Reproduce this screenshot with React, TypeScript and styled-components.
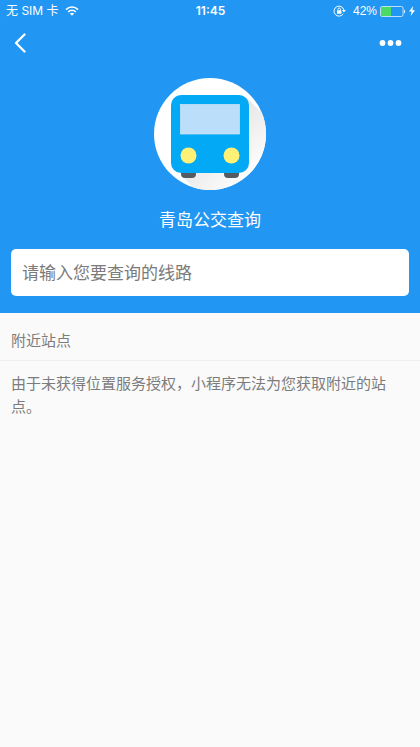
import React from "react";
import styled, { createGlobalStyle } from "styled-components";

const GlobalStyle = createGlobalStyle`
  *, *::before, *::after { box-sizing: border-box; }
  body {
    margin: 0;
    background: #fafafa;
    font-family: Inter, "Noto Sans CJK SC", sans-serif;
  }
`;

const Page = styled.div`
  min-height: 100vh;
  display: flex;
  flex-direction: column;
  background: #fafafa;
`;

const Hero = styled.header`
  display: flex;
  flex-direction: column;
  padding-bottom: 17px;
  background: #2196f3;
  color: #fff;
`;

const StatusBar = styled.div`
  display: grid;
  grid-template-columns: 1fr auto 1fr;
  align-items: center;
  height: 22px;
  padding: 0 5px 0 6px;
  font-size: 12px;
  line-height: 20px;
`;

const StatusGroup = styled.div<{ $end?: boolean }>`
  display: flex;
  align-items: center;
  justify-content: ${(p) => (p.$end ? "flex-end" : "flex-start")};
  gap: ${(p) => (p.$end ? 3 : 6)}px;
  white-space: nowrap;
`;

const Battery = styled.span`
  margin-left: 4px;
  font-family: "Liberation Sans", sans-serif;
`;

const Clock = styled.time`
  font-weight: 600;
`;

const NavBar = styled.nav`
  display: flex;
  align-items: center;
  justify-content: space-between;
  height: 42px;
  padding: 0 14px;
`;

const IconButton = styled.button`
  display: flex;
  align-items: center;
  padding: 0;
  height: 32px;
  border: 0;
  background: none;
  color: inherit;
  cursor: pointer;
`;

const Brand = styled.div`
  display: flex;
  flex-direction: column;
  align-items: center;
  padding-top: 14px;
`;

const Title = styled.h1`
  margin: 18px 0 16px;
  font-size: 17px;
  line-height: 25px;
  font-weight: 400;
`;

const SearchField = styled.input`
  height: 47px;
  margin: 0 11px;
  padding: 0 11px;
  border: 0;
  border-radius: 5px;
  background: #fff;
  color: #333;
  font: inherit;
  font-size: 17px;
  outline: none;
  &::placeholder { color: #7a7a7a; opacity: 1; }
`;

const Nearby = styled.section`
  color: #7c7c7c;
  font-size: 15px;
`;

const SectionTitle = styled.h2`
  margin: 0;
  padding: 16px 11px 8px;
  border-bottom: 1px solid #eeeeee;
  font-size: 15px;
  line-height: 23px;
  font-weight: 400;
`;

const Message = styled.p`
  margin: 0;
  padding: 11px;
  line-height: 23px;
`;

const WifiIcon = () => (
  <svg width="14" height="10" viewBox="0 0 14 10" fill="none" stroke="#fff" strokeWidth="1.6" aria-label="Wi-Fi">
    <path d="M1 3.6C4.4 .2 9.6 .2 13 3.6" />
    <path d="M3.2 5.9c2.2-2 5.4-2 7.6 0" />
    <path d="M4.9 7.6c1.2-1 3-1 4.2 0L7 9.8z" fill="#fff" stroke="none" />
  </svg>
);

const RotationLockIcon = () => (
  <svg width="13" height="12" viewBox="0 0 13 12" fill="none" stroke="#fff" aria-label="方向锁定">
    <path d="M10.2 8.9A5 5 0 1 1 10.9 5" strokeWidth="1" />
    <path d="M9 5h3.8L10.9 7.5z" fill="#fff" stroke="none" />
    <rect x="4" y="5.2" width="4.4" height="3.6" rx=".4" fill="#fff" stroke="none" />
    <path d="M4.9 5.4V4.3a1.3 1.3 0 0 1 2.6 0v1.1" strokeWidth=".9" />
  </svg>
);

const BatteryIcon = () => (
  <svg width="26" height="11" viewBox="0 0 26 11" aria-hidden="true">
    <rect x=".5" y=".5" width="22.5" height="10" rx="1.6" fill="none" stroke="#fff" strokeOpacity=".7" />
    <path d="M2 1h9v9H2a1 1 0 0 1-1-1V2a1 1 0 0 1 1-1z" fill="#4cd964" />
    <path d="M24 3.5c1.6.4 1.6 3.6 0 4z" fill="#fff" fillOpacity=".85" />
  </svg>
);

const BoltIcon = () => (
  <svg width="6" height="10" viewBox="0 0 6 10" fill="#fff" aria-label="充电中">
    <path d="M4.2 0L0 5.6h2.6L1.7 10 6 4.2H3.4z" />
  </svg>
);

const BackIcon = () => (
  <svg width="12" height="20" viewBox="0 0 12 20" fill="none" stroke="#fff" strokeWidth="2.3" strokeLinecap="round" strokeLinejoin="round">
    <path d="M10.5 1.5L2 10l8.5 8.5" />
  </svg>
);

const MoreIcon = () => (
  <svg width="28" height="6" viewBox="0 0 28 6" fill="#fff">
    <circle cx="4.5" cy="3" r="2.9" />
    <circle cx="12.5" cy="3" r="2.9" />
    <circle cx="20.5" cy="3" r="2.9" />
  </svg>
);

const BusLogo = () => (
  <svg width="112" height="112" viewBox="0 0 112 112" role="img" aria-label="公交">
    <defs>
      <clipPath id="disc">
        <circle cx="56" cy="56" r="56" />
      </clipPath>
      <linearGradient id="shade" x1="30" y1="30" x2="100" y2="100" gradientUnits="userSpaceOnUse">
        <stop offset=".4" stopColor="#e6e6e6" />
        <stop offset="1" stopColor="#ffffff" />
      </linearGradient>
    </defs>
    <circle cx="56" cy="56" r="56" fill="#fff" />
    <path d="M92 19L132 59V132H62L27 97z" fill="url(#shade)" clipPath="url(#disc)" />
    <path d="M27 94h15v2a4 4 0 0 1-4 4h-7a4 4 0 0 1-4-4zM70 94h15v2a4 4 0 0 1-4 4h-7a4 4 0 0 1-4-4z" fill="#545b61" />
    <rect x="17" y="17" width="78" height="78" rx="10" fill="#03a9f4" />
    <rect x="26.5" y="26.5" width="59" height="29.5" fill="#bbdefb" stroke="#d5e6f2" strokeWidth=".7" />
    <circle cx="34.5" cy="77.5" r="8" fill="#fff176" />
    <circle cx="77.5" cy="77.5" r="8" fill="#fff176" />
  </svg>
);

export default function App() {
  return (
    <Page>
      <GlobalStyle />
      <Hero>
        <StatusBar>
          <StatusGroup>
            <span>无 SIM 卡</span>
            <WifiIcon />
          </StatusGroup>
          <Clock>11:45</Clock>
          <StatusGroup $end>
            <RotationLockIcon />
            <Battery>42%</Battery>
            <BatteryIcon />
            <BoltIcon />
          </StatusGroup>
        </StatusBar>
        <NavBar>
          <IconButton type="button" aria-label="返回">
            <BackIcon />
          </IconButton>
          <IconButton type="button" aria-label="更多">
            <MoreIcon />
          </IconButton>
        </NavBar>
        <Brand>
          <BusLogo />
          <Title>青岛公交查询</Title>
        </Brand>
        <SearchField type="text" aria-label="线路" placeholder="请输入您要查询的线路" />
      </Hero>
      <Nearby>
        <SectionTitle>附近站点</SectionTitle>
        <Message>由于未获得位置服务授权，小程序无法为您获取附近的站点。</Message>
      </Nearby>
    </Page>
  );
}
